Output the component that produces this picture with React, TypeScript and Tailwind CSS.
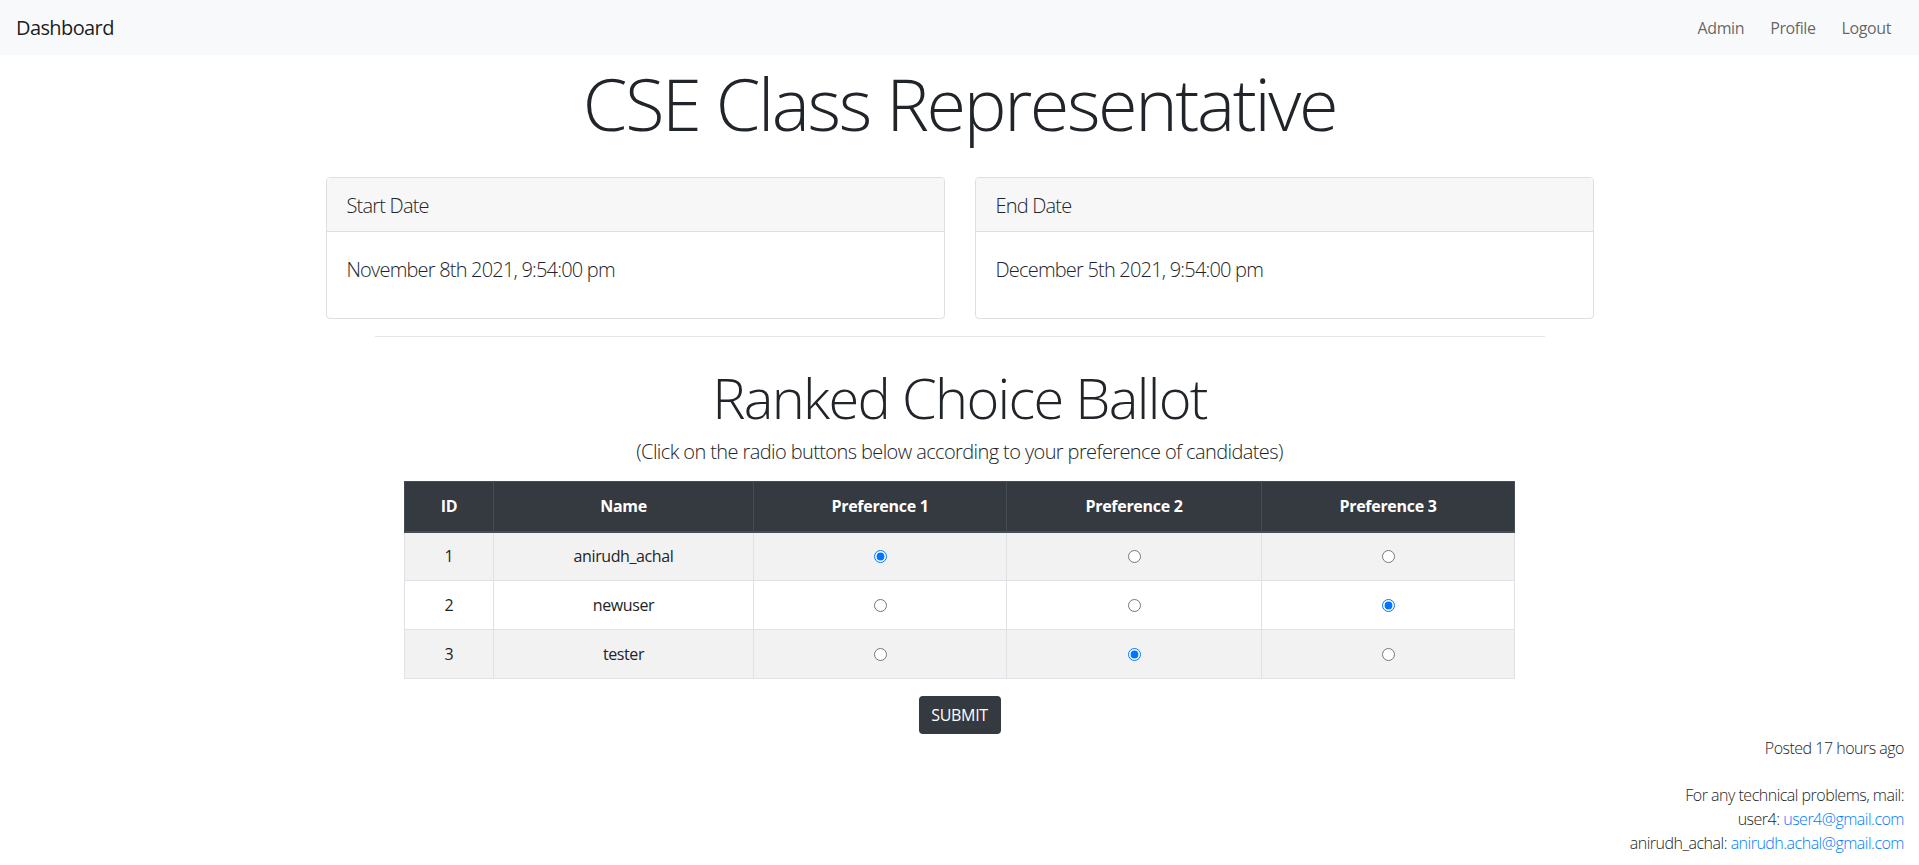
import React from "react";

const rows = [
  { id: 1, name: "anirudh_achal", pick: 0 },
  { id: 2, name: "newuser", pick: 2 },
  { id: 3, name: "tester", pick: 1 },
];

export default function App() {
  return (
    <div
      className="min-h-[865px] bg-white text-[#212529]"
      style={{ fontFamily: '"Open Sans", "Noto Sans", sans-serif' }}
    >
      <nav className="h-[55px] bg-[#f8f9fa] flex items-center justify-between pl-4 pr-[28px]">
        <span className="text-[20px] leading-[30px] text-[rgba(0,0,0,0.9)] tracking-[-0.6px]">
          Dashboard
        </span>
        <div className="flex items-center gap-[26px] text-[16px] leading-[24px] text-[rgba(0,0,0,0.62)] tracking-[-0.4px]">
          <span>Admin</span>
          <span>Profile</span>
          <span>Logout</span>
        </div>
      </nav>

      <h1 className="mt-[5px] text-center text-[72px] leading-[86px] font-light tracking-[-2.4px]">
        CSE Class Representative
      </h1>

      <div className="mt-[31px] w-[1268px] mx-auto grid grid-cols-2 gap-[30px]">
        {[
          ["Start Date", "November 8th 2021, 9:54:00 pm"],
          ["End Date", "December 5th 2021, 9:54:00 pm"],
        ].map(([h, v]) => (
          <div key={h} className="border border-[#dfdfdf] rounded-[4px] overflow-hidden">
            <div className="h-[54px] bg-[#f7f7f7] border-b border-[#dfdfdf] px-5 pt-[2px] flex items-center text-[20px] font-light tracking-[-0.8px]">
              {h}
            </div>
            <div className="h-[86px] px-5 pt-[23px] text-[20px] leading-[30px] font-light tracking-[-0.8px]">
              {v}
            </div>
          </div>
        ))}
      </div>

      <div className="mt-[17px] w-[1170px] mx-auto h-px bg-[#e5e5e5]" />

      <h2 className="mt-[27px] text-center text-[56px] leading-[67px] font-light tracking-[-1.7px]">
        Ranked Choice Ballot
      </h2>
      <p className="mt-[6px] text-center text-[20px] leading-[30px] font-light tracking-[-0.6px]">
        (Click on the radio buttons below according to your preference of candidates)
      </p>

      <table className="mt-[14px] mx-auto w-[1110px] table-fixed border-collapse text-[16px] leading-[24px] text-center">
        <colgroup>
          <col className="w-[89px]" />
          <col className="w-[260px]" />
          <col className="w-[253px]" />
          <col className="w-[255px]" />
          <col className="w-[253px]" />
        </colgroup>
        <thead>
          <tr className="bg-[#343a40] text-white">
            {["ID", "Name", "Preference 1", "Preference 2", "Preference 3"].map((t) => (
              <th
                key={t}
                className="h-[50px] border border-[#454d55] border-b-2 font-bold tracking-[-0.3px] align-middle"
              >
                {t}
              </th>
            ))}
          </tr>
        </thead>
        <tbody>
          {rows.map((r, i) => (
            <tr key={r.id} className={i % 2 === 0 ? "bg-[#f2f2f2]" : "bg-white"}>
              <td className="h-[49px] border border-[#dee2e6] align-middle">{r.id}</td>
              <td className="h-[49px] border border-[#dee2e6] align-middle tracking-[-0.4px]">{r.name}</td>
              {[0, 1, 2].map((c) => (
                <td key={c} className="h-[49px] border border-[#dee2e6] align-middle">
                  <div className="flex items-center justify-center">
                    <input
                      type="radio"
                      name={`pref${c}`}
                      defaultChecked={r.pick === c}
                      className="w-[13px] h-[13px] m-0"
                    />
                  </div>
                </td>
              ))}
            </tr>
          ))}
        </tbody>
      </table>

      <div className="mt-[17px] flex justify-center">
        <button className="h-[38px] w-[82px] bg-[#343a40] text-white rounded-[4px] text-[16px] leading-[24px] tracking-[-0.3px]">
          SUBMIT
        </button>
      </div>

      <div className="mt-[2px] pr-[15px] text-right text-[16px] leading-[24px] font-light tracking-[-0.5px]">
        <p>Posted 17 hours ago</p>
        <div className="mt-[23px]">
          <p>For any technical problems, mail:</p>
          <p>
            user4: <a className="text-[#007bff]">user4@gmail.com</a>
          </p>
          <p>
            anirudh_achal: <a className="text-[#007bff]">anirudh.achal@gmail.com</a>
          </p>
        </div>
      </div>
    </div>
  );
}
